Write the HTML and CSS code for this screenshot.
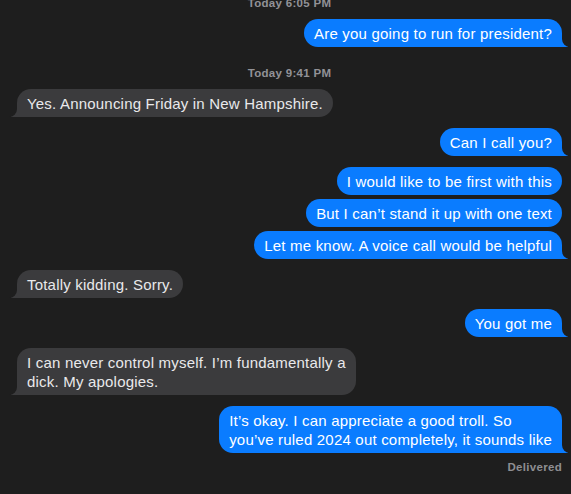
FILE: index.html
```html
<!DOCTYPE html>
<html lang="en">
<head>
<meta charset="utf-8">
<title>Messages</title>
<link rel="stylesheet" href="styles.css">
</head>
<body>
<main class="chat">
  <div class="stamp first">Today 6:05 PM</div>
  <div class="msg me tail gap-s">Are you going to run for president?</div>
  <div class="stamp">Today 9:41 PM</div>
  <div class="msg them tail gap-s">Yes. Announcing Friday in New Hampshire.</div>
  <div class="msg me tail">Can I call you?</div>
  <div class="msg me">I would like to be first with this</div>
  <div class="msg me cont">But I can’t stand it up with one text</div>
  <div class="msg me tail cont">Let me know. A voice call would be helpful</div>
  <div class="msg them tail">Totally kidding. Sorry.</div>
  <div class="msg me tail">You got me</div>
  <div class="msg them tail">I can never control myself. I’m fundamentally a<br>dick. My apologies.</div>
  <div class="msg me tail">It’s okay. I can appreciate a good troll. So<br>you’ve ruled 2024 out completely, it sounds like</div>
  <div class="status">Delivered</div>
</main>
</body>
</html>
```

FILE: styles.css
```css
html, body {
  margin: 0;
  padding: 0;
  background: #1e1e1e;
  height: 100%;
  overflow: hidden;
}

.chat {
  display: flex;
  flex-direction: column;
  padding: 0 9px 0 17px;
  font-family: "Liberation Sans", Arial, sans-serif;
}

.stamp {
  align-self: center;
  font-size: 11.5px;
  line-height: 13px;
  font-weight: 700;
  letter-spacing: 0.3px;
  color: #929297;
  margin-top: 20px;
}

.stamp.first {
  margin-top: -3px;
}

.msg {
  position: relative;
  isolation: isolate;
  max-width: 400px;
  padding: 5px 10px 4px;
  font-size: 15px;
  line-height: 19px;
  letter-spacing: 0.2px;
  border-radius: 14px;
  margin-top: 11px;
}

.msg.gap-s {
  margin-top: 10px;
}

.stamp + .msg.gap-s {
  margin-top: 9px;
}

.msg.cont {
  margin-top: 4px;
}

.me {
  align-self: flex-end;
  background: #0a7cff;
  color: #ffffff;
}

.them {
  align-self: flex-start;
  background: #3b3b3d;
  color: #e9e9eb;
}

.tail::before,
.tail::after {
  content: "";
  position: absolute;
  bottom: 0;
  z-index: -1;
}

.me.tail::before {
  right: -6px;
  width: 20px;
  height: 14px;
  background: #0a7cff;
}

.me.tail::after {
  right: -12px;
  width: 12px;
  height: 16px;
  background: #1e1e1e;
  border-bottom-left-radius: 8px;
}

.them.tail::before {
  left: -6px;
  width: 20px;
  height: 14px;
  background: #3b3b3d;
}

.them.tail::after {
  left: -12px;
  width: 12px;
  height: 16px;
  background: #1e1e1e;
  border-bottom-right-radius: 8px;
}

.status {
  align-self: flex-end;
  margin-top: 8px;
  font-size: 11.5px;
  line-height: 13px;
  font-weight: 700;
  letter-spacing: 0.3px;
  color: #8e8e92;
}
```
